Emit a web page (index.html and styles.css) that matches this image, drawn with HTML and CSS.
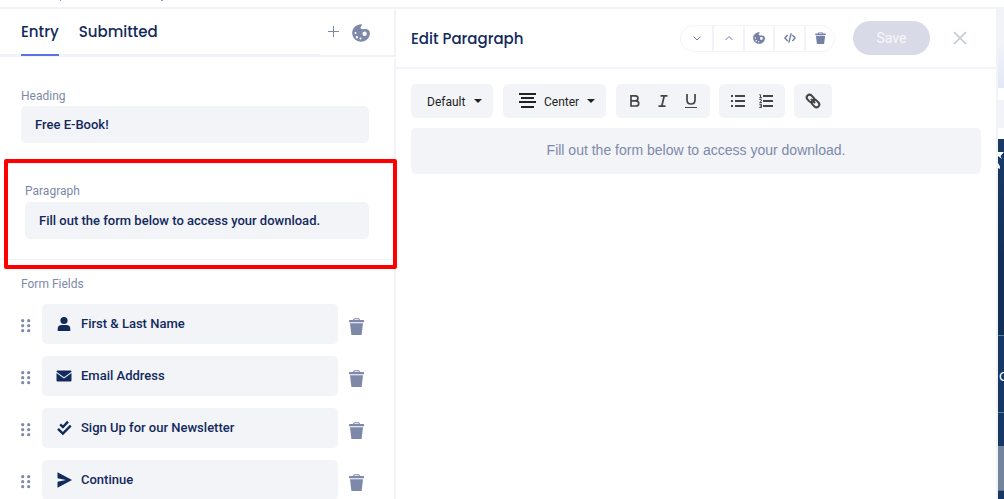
FILE: index.html
```html
<!DOCTYPE html>
<html lang="en">
<head>
<meta charset="utf-8">
<title>Form editor</title>
<link rel="stylesheet" href="styles.css">
</head>
<body>
<svg class="defs" aria-hidden="true">
  <symbol id="palette" viewBox="0 0 18 18"><path fill-rule="evenodd" d="M9 .2C5 .3.3 3.500.2 8.800c0 5.200 4 9 8.800 9 5 0 8.900-3.900 8.900-8.500C17.900 6.300 15.600 5 13 5.100c-2 0-3.800.300-4.400-.8C8.100 3 9.900 2.300 10 .800 10 .4 9.500.2 9 .2zM12.600 7.600a2.200 2.200 0 1 1 0 4.400 2.200 2.200 0 0 1 0-4.400zM3.500 8a1 1 0 1 1 0 2 1 1 0 0 1 0-2zm1.400 4a1.200 1.200 0 1 1 0 2.400 1.200 1.200 0 0 1 0-2.400zm3.600 1.500a1 1 0 1 1 0 2 1 1 0 0 1 0-2z"/></symbol>
  <symbol id="trash" viewBox="0 0 15 17"><path d="M0 2.500Q0 2 .8 2H4Q4.300.2 5.500.2h4Q10.700.2 11 2h3.200q.8 0 .8.500V4.200H0zM5.200 2h4.600q-.1-.8-.7-.8H5.900q-.6 0-.7.800zM1 5.200h13L12.600 17H2.400z"/></symbol>
  <symbol id="grip" viewBox="0 0 10 14"><g><circle cx="1.700" cy="1.700" r="1.600"/><circle cx="7.700" cy="1.700" r="1.600"/><circle cx="1.700" cy="6.700" r="1.600"/><circle cx="7.700" cy="6.700" r="1.600"/><circle cx="1.700" cy="11.700" r="1.600"/><circle cx="7.700" cy="11.700" r="1.600"/></g></symbol>
  <symbol id="caret" viewBox="0 0 8 4"><path d="M0 0h8L4 4z"/></symbol>
</svg>
<div class="topbar"><svg class="descenders" width="104" height="1" viewBox="0 0 104 1" aria-hidden="true"><path d="M0 0h1v1H0zM101 0h2v1h-2z"/></svg></div>
<div class="app">
  <aside class="sidebar">
    <header class="side-head">
      <nav class="tabs">
        <button class="tab active" type="button">Entry</button>
        <button class="tab" type="button">Submitted</button>
      </nav>
      <div class="side-tools">
        <button class="icon-btn" type="button" aria-label="Add"><svg width="11" height="11" viewBox="0 0 11 11"><path d="M5 0h1v5h5v1H6v5H5V6H0V5h5z"/></svg></button>
        <button class="icon-btn" type="button" aria-label="Theme"><svg width="18" height="18"><use href="#palette"/></svg></button>
      </div>
    </header>
    <div class="side-body">
      <section class="group">
        <label for="heading">Heading</label>
        <input class="field" id="heading" type="text" value="Free E-Book!">
      </section>
      <section class="group selected">
        <label for="paragraph">Paragraph</label>
        <input class="field" id="paragraph" type="text" value="Fill out the form below to access your download.">
      </section>
      <section class="group form-fields">
        <h2 class="label">Form Fields</h2>
        <ul class="rows">
          <li class="row">
            <button class="icon-btn" type="button" aria-label="Move"><svg width="10" height="14"><use href="#grip"/></svg></button>
            <button class="item" type="button"><svg width="16" height="16" viewBox="0 0 16 16"><circle cx="8" cy="4.500" r="3.600"/><path d="M1.700 15v-2q0-4 4-4h4.600q4 0 4 4v2z"/></svg>First &amp; Last Name</button>
            <button class="icon-btn" type="button" aria-label="Delete"><svg width="15" height="17"><use href="#trash"/></svg></button>
          </li>
          <li class="row">
            <button class="icon-btn" type="button" aria-label="Move"><svg width="10" height="14"><use href="#grip"/></svg></button>
            <button class="item" type="button"><svg width="16" height="16" viewBox="0 0 16 16"><path d="M.5 3.500q0-1 1-1h13q1 0 1 1v.3L8 9.200.5 3.800zM.5 5l7.500 5.600L15.500 5v7.500q0 1-1 1h-13q-1 0-1-1z"/></svg>Email Address</button>
            <button class="icon-btn" type="button" aria-label="Delete"><svg width="15" height="17"><use href="#trash"/></svg></button>
          </li>
          <li class="row">
            <button class="icon-btn" type="button" aria-label="Move"><svg width="10" height="14"><use href="#grip"/></svg></button>
            <button class="item" type="button"><svg width="16" height="16" viewBox="0 0 16 16"><g class="check"><path d="M4.200 4.400 6.900 7 12 1.700"/><path d="M2 8.800 6.900 13.600 14.700 5.700"/></g></svg>Sign Up for our Newsletter</button>
            <button class="icon-btn" type="button" aria-label="Delete"><svg width="15" height="17"><use href="#trash"/></svg></button>
          </li>
          <li class="row">
            <button class="icon-btn" type="button" aria-label="Move"><svg width="10" height="14"><use href="#grip"/></svg></button>
            <button class="item" type="button"><svg width="16" height="16" viewBox="0 0 16 16"><path d="M1.500.2 16 8 1.500 15.800V9.800L10 8 1.500 6.200z"/></svg>Continue</button>
            <button class="icon-btn" type="button" aria-label="Delete"><svg width="15" height="17"><use href="#trash"/></svg></button>
          </li>
        </ul>
      </section>
    </div>
    <div class="highlight"></div>
  </aside>
  <main class="editor">
    <header class="editor-head">
      <h1>Edit Paragraph</h1>
      <div class="pill">
        <button type="button" aria-label="Move down"><svg width="8" height="5" viewBox="0 0 8 5"><path class="line" d="M.5.5 4 4 7.500.5"/></svg></button>
        <button type="button" aria-label="Move up"><svg width="8" height="5" viewBox="0 0 8 5"><path class="line" d="M.5 4 4 .5 7.500 4"/></svg></button>
        <button type="button" aria-label="Style"><svg width="12" height="12"><use href="#palette"/></svg></button>
        <button type="button" aria-label="Code"><svg width="12" height="10" viewBox="0 0 12 10"><path class="code" d="M3.600 2 .9 5l2.700 3M8.400 2l2.700 3-2.700 3M7.200.4 4.800 9.600"/></svg></button>
        <button type="button" aria-label="Delete"><svg width="11" height="12"><use href="#trash"/></svg></button>
      </div>
      <button class="save" type="button">Save</button>
      <button class="icon-btn close" type="button" aria-label="Close"><svg width="14" height="14" viewBox="0 0 14 14"><path d="M1 1l12 12M13 1 1 13"/></svg></button>
    </header>
    <div class="editor-body">
      <div class="toolbar">
        <div class="tool drop">
          <select aria-label="Text style"><option>Default</option></select>
          <svg width="8" height="4"><use href="#caret"/></svg>
        </div>
        <div class="tool drop align">
          <svg width="18" height="16" viewBox="0 0 18 16"><path d="M0 0h17v2H0zM2 4h13v2H2zM0 8h17v2H0zM2 13h13v2H2z"/></svg>
          <select aria-label="Alignment"><option>Center</option></select>
          <svg width="8" height="4"><use href="#caret"/></svg>
        </div>
        <div class="tool buttons">
          <button type="button" aria-label="Bold"><svg viewBox="0 0 14 14"><path class="stroke" d="M3 1.900h4.500q2.400 0 2.400 2.400T7.500 6.800H3zM3 6.800h5q2.700 0 2.700 2.600T8 12H3z"/></svg></button>
          <button type="button" aria-label="Italic"><svg viewBox="0 0 14 14"><path class="stroke" d="M4.500 1.800h7M2.500 12.200h7M8.200 2 5.800 12"/></svg></button>
          <button type="button" aria-label="Underline"><svg viewBox="0 0 14 14"><path class="stroke" d="M3 0v6q0 4 4 4t4-4V0"/><path d="M1 13h12v1H1z"/></svg></button>
        </div>
        <div class="tool buttons">
          <button type="button" aria-label="Bulleted list"><svg viewBox="0 0 14 14"><path d="M0 1h2v2H0zM4 1h10v2H4zM0 6h2v2H0zM4 6h10v2H4zM0 11h2v2H0zM4 11h10v2H4z"/></svg></button>
          <button type="button" aria-label="Numbered list"><svg viewBox="0 0 14 14"><path d="M4 1h10v2H4zM4 6h10v2H4zM4 11h10v2H4z"/><path class="thin" d="M.3.800h1.200v3M.3 3.700H3M.3 5.400h2V7L.6 8.600H3M.3 10.300h2.200v3.200H.3M.8 11.900h1.700"/></svg></button>
        </div>
        <div class="tool buttons">
          <button type="button" aria-label="Link"><svg viewBox="0 0 14 14"><g class="chain" transform="rotate(45 7 7)"><rect x="-.7" y="4.200" width="8.200" height="5.600" rx="2.800"/><rect x="6.500" y="4.200" width="8.200" height="5.600" rx="2.800"/><path d="M4 7h6"/></g></svg></button>
        </div>
      </div>
      <input class="content" type="text" aria-label="Paragraph content" value="Fill out the form below to access your download.">
    </div>
  </main>
  <div class="preview" aria-hidden="true">
    <div class="sky"></div>
    <div class="bar"></div>
    <div class="hero">
      <svg width="6" height="24" viewBox="0 0 6 24"><path d="M0 3h6L2.500 7 4 10 0 7zM0 14q2 2 2 6L0 19z"/></svg>
    </div>
    <div class="cell">C</div>
    <div class="gap"></div>
    <div class="submit"></div>
  </div>
</div>
</body>
</html>
```
FILE: styles.css
```css
* { box-sizing: border-box; }
html, body { height: 100%; }
body {
  margin: 0;
  display: flex;
  flex-direction: column;
  overflow: hidden;
  background: #fff;
  color: #12295c;
  font: 500 13px/16px Roboto, sans-serif;
}
button, input, select { margin: 0; padding: 0; border: 0; background: none; color: inherit; font: inherit; }
svg { display: block; flex: none; fill: currentColor; }
h1, h2, ul { margin: 0; padding: 0; }
.defs { position: absolute; width: 0; height: 0; }
.topbar { flex: none; height: 9px; border-bottom: 2px solid #f2f3f8; padding-left: 60px; color: #8e98b5; }
.app { flex: 1; min-height: 0; display: grid; grid-template-columns: 396px 1fr 6px; }

.sidebar { position: relative; display: flex; flex-direction: column; gap: 2px; min-height: 0; }
.side-head { display: flex; height: 48px; border-right: 2px solid #f2f3f8; border-bottom: 2px solid #f2f3f8; }
.tabs { display: flex; gap: 20px; width: 320px; padding-left: 21px; border-bottom: 1px solid #f2f3f8; }
.tab { height: 47px; border-bottom: 2px solid transparent; font: 500 15px/24px Poppins, Inter, sans-serif; }
.tab.active { border-color: #5c73e6; }
.side-tools { display: flex; align-items: center; gap: 13px; padding: 0 0 2px 8px; color: #8591b0; }
.side-tools .icon-btn:last-child { padding-top: 4px; }
.icon-btn { display: grid; place-items: center; color: #7e89a9; }
.side-body { flex: 1; min-height: 0; overflow: hidden; border-right: 2px solid #f2f3f8; }
.group { display: flex; flex-direction: column; gap: 2px; padding: 29px 25px 20px 21px; border-bottom: 1px solid #f2f3f8; }
.group label, .label { font: 400 12px/16px Roboto, sans-serif; color: #7e89a9; }
.field { width: 100%; height: 37px; padding: 0 14px; border-radius: 5px; background: #f3f4f8; }
.selected { gap: 3px; padding: 19px 25px 20px; }
.form-fields { padding-top: 16px; gap: 12px; border-bottom: 0; }
.rows { display: flex; flex-direction: column; gap: 12px; list-style: none; }
.row { display: grid; grid-template-columns: 10px 1fr 15px; column-gap: 11px; padding-right: 5px; }
.row > .icon-btn { padding-top: 4px; }
.item { display: flex; align-items: center; gap: 9px; height: 40px; padding: 0 14px; border-radius: 5px; background: #f3f4f8; text-align: left; }
.check { fill: none; stroke: currentColor; stroke-width: 2.4; }
.highlight { position: absolute; top: 150px; left: 4px; right: -1px; height: 110px; border: 4px solid #f00; border-radius: 2px; pointer-events: none; z-index: 1; }

.editor { min-width: 0; border-right: 2px solid #f2f3f8; }
.editor-head { display: flex; align-items: center; height: 60px; padding: 0 29px 0 15px; border-bottom: 2px solid #f2f3f8; }
.editor-head h1 { flex: 1; padding-top: 2px; font: 500 15px/24px Poppins, Inter, sans-serif; }
.pill { display: grid; grid-template-columns: 33px 31px 30px 31px 28px; height: 27px; border: 1px solid #f2f3f8; border-radius: 14px; color: #7480a4; }
.pill button { display: grid; place-items: center; border-right: 2px solid #f2f3f8; }
.pill button:last-child { border-right: 0; }
.line, .code { fill: none; stroke: currentColor; }
.code { stroke-width: 1.5; }
.save { width: 77px; height: 34px; margin: 0 23px 0 18px; border-radius: 17px; background: #d8dbe7; color: #f6f7fb; font: 400 14px/20px Roboto, sans-serif; }
.close { color: #c3c8d9; }
.close path { stroke: currentColor; stroke-width: 1.6; }
.editor-body { display: flex; flex-direction: column; gap: 10px; padding: 15px; }
.toolbar { display: flex; gap: 10px; color: #222; }
.tool { display: flex; align-items: center; height: 34px; border-radius: 5px; background: #f3f4f8; }
.drop { gap: 8px; padding: 0 11px 0 16px; }
.align { gap: 7px; }
.drop select { appearance: none; padding-top: 1px; font-weight: 400; font-size: 12px; }
.buttons { gap: 14px; padding: 0 12px; color: #444; }
.buttons + .buttons { margin-left: -1px; }
.buttons button { display: grid; place-items: center; }
.buttons svg { width: 14px; height: 14px; overflow: visible; }
.stroke { fill: none; stroke: currentColor; stroke-width: 1.7; }
.thin { fill: none; stroke: currentColor; stroke-width: 1; }
.chain { fill: none; stroke: currentColor; stroke-width: 2; }
.content { width: 100%; height: 46px; padding-bottom: 2px; border-radius: 5px; background: #f3f4f8; color: #7e89a9; font: 400 14px/20px "Liberation Sans", Arial, sans-serif; text-align: center; }

.preview { display: flex; flex-direction: column; min-height: 0; overflow: hidden; background: #163863; color: #fff; }
.sky { flex: none; height: 79px; background: linear-gradient(#f2f3f8 40%, #e2e8f5); }
.bar { flex: none; height: 51px; border: solid #fff; border-width: 12px 0 11px; background: #f2f3f8; }
.hero { flex: none; height: 197px; padding-top: 10px; border-bottom: 1px solid #4f8593; background: linear-gradient(#193b66, #123057 60%); }
.cell { flex: none; height: 77px; border-bottom: 1px solid #4f8593; padding: 31px 0 0 1px; font: 400 13px/20px "Liberation Sans", Arial, sans-serif; }
.gap { flex: none; height: 33px; }
.submit { flex: none; height: 45px; background: #73859d; border-bottom: 1px solid #5b6f8b; }
```
